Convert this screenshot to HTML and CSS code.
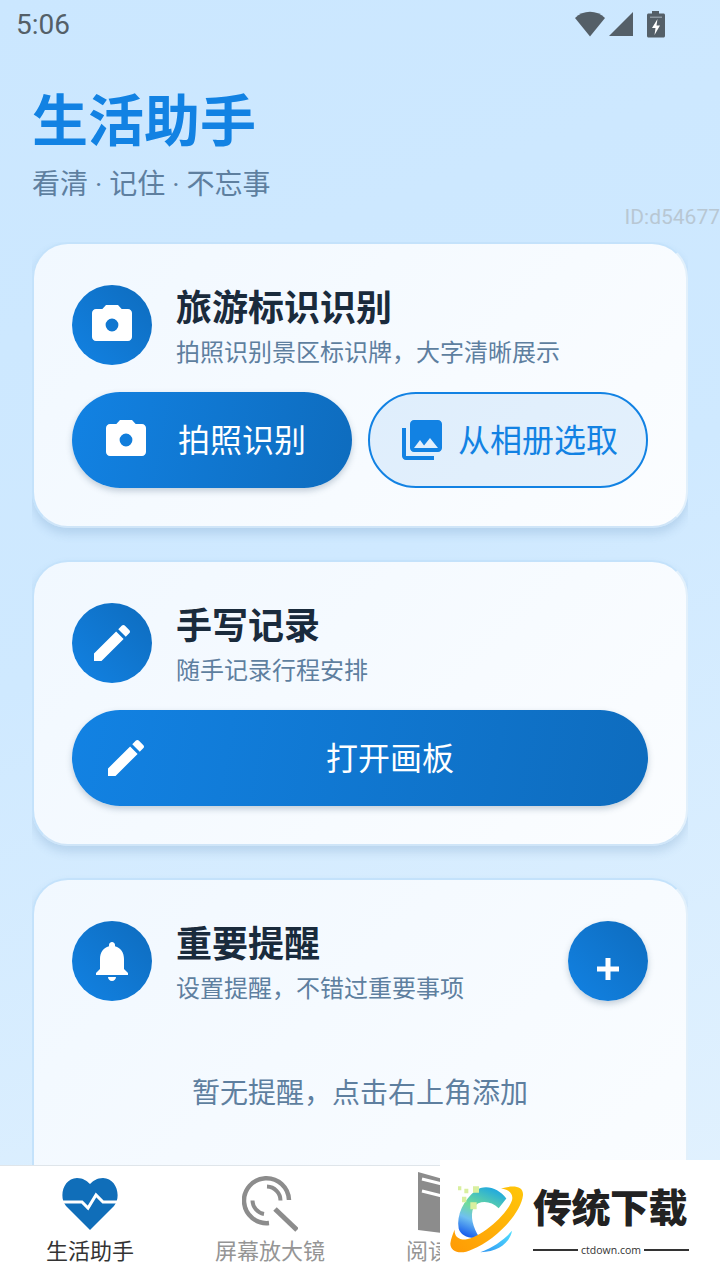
FILE: index.html
```html
<!DOCTYPE html>
<html>
  <head>
    <title>生活助手</title>
    <link rel="stylesheet" href="styles.css">
  </head>
  <body>
    <div class="screen">
      <div class="statusbar">
        <span class="time">5:06</span>
        <div class="status-icons">
          <svg width="32" height="26" viewBox="0 0 32 26"><path d="M1 7C9 -1.500 23 -1.500 31 7L16 25.500Z" fill="#545f68"/></svg>
          <svg width="26" height="26" viewBox="0 0 26 26"><path d="M25 1V25H1Z" fill="#545f68"/></svg>
          <svg class="battery" width="20" height="28" viewBox="0 0 20 28"><path d="M6 1H13V3.500H17.500C18.300 3.500 19 4.200 19 5V26C19 26.800 18.300 27.500 17.500 27.500H2.500C1.700 27.500 1 26.800 1 26V5C1 4.200 1.700 3.500 2.500 3.500H6Z" fill="#545f68"/><path d="M4 6.500H16V8H4Z" fill="#8c97a0"/><path d="M11.500 9L6 18H9.500L8.500 25L14 15.500H10.500Z" fill="#fff"/></svg>
        </div>
      </div>

      <header class="page-head">
        <h1>生活助手</h1>
        <p>看清 · 记住 · 不忘事</p>
      </header>

      <div class="user-id">ID:d54677</div>

      <main class="cards">
        <section class="card">
          <div class="card-head">
            <div class="round-icon">
              <svg width="48" height="48" viewBox="0 0 24 24"><path fill-rule="evenodd" d="M9 2L7.170 4H4c-1.100 0-2 .9-2 2v12c0 1.100.9 2 2 2h16c1.100 0 2-.9 2-2V6c0-1.100-.9-2-2-2h-3.170L15 2H9zm3 13.200a3.200 3.200 0 1 1 0-6.400 3.200 3.200 0 0 1 0 6.400z"/></svg>
            </div>
            <div class="card-info">
              <h2>旅游标识识别</h2>
              <p>拍照识别景区标识牌，大字清晰展示</p>
            </div>
          </div>
          <div class="btn-row">
            <button class="btn btn-fill">
              <svg width="48" height="48" viewBox="0 0 24 24"><path fill-rule="evenodd" d="M9 2L7.170 4H4c-1.100 0-2 .9-2 2v12c0 1.100.9 2 2 2h16c1.100 0 2-.9 2-2V6c0-1.100-.9-2-2-2h-3.170L15 2H9zm3 13.200a3.200 3.200 0 1 1 0-6.400 3.200 3.200 0 0 1 0 6.400z"/></svg>
              <span>拍照识别</span>
            </button>
            <button class="btn btn-line">
              <svg width="48" height="48" viewBox="0 0 24 24"><path d="M22 16V4c0-1.100-.9-2-2-2H8c-1.100 0-2 .9-2 2v12c0 1.100.9 2 2 2h12c1.100 0 2-.9 2-2zm-11-4l2.030 2.710L16 11l4 5H8l3-4zM2 6v14c0 1.100.9 2 2 2h14v-2H4V6H2z"/></svg>
              <span>从相册选取</span>
            </button>
          </div>
        </section>

        <section class="card">
          <div class="card-head">
            <div class="round-icon">
              <svg width="48" height="48" viewBox="0 0 24 24"><path d="M3 17.250V21h3.750L17.810 9.940l-3.750-3.750L3 17.250zM20.710 7.040c.39-.39.39-1.020 0-1.410l-2.340-2.340c-.39-.39-1.020-.39-1.410 0l-1.830 1.830 3.750 3.750 1.830-1.830z"/></svg>
            </div>
            <div class="card-info">
              <h2>手写记录</h2>
              <p>随手记录行程安排</p>
            </div>
          </div>
          <div class="btn-row">
            <button class="btn btn-fill">
              <svg width="48" height="48" viewBox="0 0 24 24"><path d="M3 17.250V21h3.750L17.810 9.940l-3.750-3.750L3 17.250zM20.710 7.040c.39-.39.39-1.020 0-1.410l-2.340-2.340c-.39-.39-1.020-.39-1.410 0l-1.830 1.830 3.750 3.750 1.830-1.830z"/></svg>
              <span>打开画板</span>
            </button>
          </div>
        </section>

        <section class="card card-open">
          <div class="card-head">
            <div class="round-icon">
              <svg width="48" height="48" viewBox="0 0 24 24"><path d="M12 22c1.100 0 2-.9 2-2h-4c0 1.100.89 2 2 2zm6-6v-5c0-3.070-1.640-5.640-4.500-6.320V4c0-.83-.67-1.500-1.500-1.500s-1.500.67-1.500 1.500v.68C7.630 5.360 6 7.920 6 11v5l-2 2v1h16v-1l-2-2z"/></svg>
            </div>
            <div class="card-info">
              <h2>重要提醒</h2>
              <p>设置提醒，不错过重要事项</p>
            </div>
            <button class="add-btn">
              <svg width="24" height="24" viewBox="0 0 24 24"><path d="M9.500 1H14.500V9.500H23V14.500H14.500V23H9.500V14.500H1V9.500H9.500Z"/></svg>
            </button>
          </div>
          <p class="empty">暂无提醒，点击右上角添加</p>
        </section>
      </main>

      <nav class="tabbar">
        <div class="tab tab-active">
          <svg width="56" height="60" viewBox="0 0 56 60">
            <path d="M28 56L4 32C-4 22 2 4 15 4C21 4 25 7 28 10C31 7 35 4 41 4C54 4 60 22 52 32Z" fill="#106eb9"/>
            <path d="M0 28H20L26 34L34 21L41 28H56" fill="none" stroke="#fff" stroke-width="3"/>
          </svg>
          <span>生活助手</span>
        </div>
        <div class="tab">
          <svg width="56" height="60" viewBox="0 0 56 60" fill="none" stroke="#8c8c8c">
            <path d="M47 26A22.500 22.500 0 1 0 27 49" stroke-width="4.500"/>
            <path d="M25 12.500A14 14 0 0 1 38.500 26.500" stroke-width="4"/>
            <path d="M10.500 26.500A14 14 0 0 0 22 40" stroke-width="4"/>
            <path d="M33 35L55 56" stroke-width="5"/>
          </svg>
          <span>屏幕放大镜</span>
        </div>
        <div class="tab">
          <svg class="book-icon" width="64" height="62" viewBox="0 0 64 62">
            <path d="M0 0L32 9V62L0 58Z" fill="#8c8c8c"/>
            <path d="M4 7L32 14M4 19L32 26" stroke="#fff" stroke-width="3"/>
          </svg>
          <span>阅读助手</span>
        </div>
      </nav>

      <div class="badge">
        <svg class="badge-logo" width="80" height="77" viewBox="50 90 240 230">
          <defs>
            <linearGradient id="ring" x1="1" y1="0" x2="0" y2="1">
              <stop offset="0" stop-color="#ffc60a"/>
              <stop offset="1" stop-color="#ff9a05"/>
            </linearGradient>
            <linearGradient id="cee" x1="0.7" y1="0" x2="0.3" y2="1">
              <stop offset="0" stop-color="#1fa8e0"/>
              <stop offset="0.45" stop-color="#6fdc9a"/>
              <stop offset="0.7" stop-color="#6fc0f0"/>
              <stop offset="1" stop-color="#1c62ec"/>
            </linearGradient>
            <linearGradient id="tail" x1="1" y1="0" x2="0" y2="1">
              <stop offset="0" stop-color="#52e0ff"/>
              <stop offset="1" stop-color="#2f96f2"/>
            </linearGradient>
          </defs>
          <path d="M228 145C205 115 165 100 135 122C100 150 78 195 85 235C90 255 115 268 148 262C128 235 118 195 130 172C145 150 180 150 205 174Z" fill="url(#cee)"/>
          <path d="M212 115C245 105 280 105 278 135C272 190 195 270 125 298C90 315 60 305 60 280C62 265 68 250 73 238C72 255 80 268 105 268C150 262 230 195 245 150C250 130 235 118 212 115Z" fill="url(#ring)"/>
          <path d="M245 242C240 275 205 305 150 306C190 292 222 268 245 242Z" fill="url(#tail)"/>
          <path d="M128 108H146V128H128ZM83 108H93V120H83ZM102 116H114V129H102ZM95 140H108V156H95ZM120 156H139V177H120Z" fill="#d9ef9f"/>
        </svg>
        <div class="badge-text">
          <strong>传统下载</strong>
          <div class="badge-site"><i></i><span>ctdown.com</span><i></i></div>
        </div>
      </div>
    </div>
  </body>
</html>
```

FILE: styles.css
```css
* {
  box-sizing: border-box;
}

html, body {
  margin: 0;
  padding: 0;
}

body {
  font-family: Roboto, "Noto Sans CJK SC", sans-serif;
}

.screen {
  position: relative;
  display: flex;
  flex-direction: column;
  width: 720px;
  height: 1280px;
  overflow: hidden;
  background: linear-gradient(160deg, #cbe7ff 0%, #cfe9ff 45%, #e3f2fe 100%);
}

.statusbar {
  display: flex;
  justify-content: space-between;
  align-items: center;
  height: 52px;
  padding: 0 54px 4px 16px;
  flex-shrink: 0;
}

.time {
  font-size: 28px;
  color: #545f68;
}

.status-icons {
  display: flex;
  align-items: center;
  gap: 2px;
}

.battery {
  margin-left: 10px;
}

.page-head {
  padding: 30px 32px 0;
  height: 190px;
  flex-shrink: 0;
}

.page-head h1 {
  margin: 0;
  font-size: 56px;
  line-height: 80px;
  font-weight: 700;
  color: #1282e3;
}

.page-head p {
  margin: 3px 0 0;
  font-size: 28px;
  line-height: 40px;
  color: #5e7f9f;
}

.user-id {
  position: absolute;
  top: 203px;
  right: 0;
  font-size: 21px;
  line-height: 28px;
  color: #b8c7d3;
  white-space: nowrap;
}

.cards {
  flex: 1;
  min-height: 0;
  margin: 0 32px;
  overflow: hidden;
  display: flex;
  flex-direction: column;
  gap: 32px;
}

.card {
  flex-shrink: 0;
  height: 286px;
  padding: 41px 38px 0;
  border: 2px solid #c4e2fb;
  border-right-color: #e2f0fb;
  border-bottom-color: #cfe5f8;
  border-radius: 36px;
  background: linear-gradient(135deg, #f1f8ff 0%, #fbfdff 100%);
  box-shadow: 0 6px 10px rgba(60, 110, 160, 0.18);
}

.card-open {
  height: 400px;
}

.card-head {
  display: flex;
  align-items: center;
  gap: 24px;
  height: 80px;
}

.round-icon {
  display: flex;
  align-items: center;
  justify-content: center;
  width: 80px;
  height: 80px;
  flex-shrink: 0;
  border-radius: 50%;
  background: linear-gradient(45deg, #1282e3, #0e6cbe);
  fill: #fff;
}

.card-info {
  flex: 1;
  min-width: 0;
  align-self: flex-start;
}

.card-info h2 {
  margin: 1px 0 4px;
  font-size: 36px;
  line-height: 46px;
  font-weight: 700;
  color: #1a2b3c;
}

.card-info p {
  margin: 0;
  font-size: 24px;
  line-height: 34px;
  color: #5e7f9f;
}

.btn-row {
  display: flex;
  gap: 16px;
  margin-top: 27px;
}

.btn {
  display: flex;
  align-items: center;
  gap: 12px;
  flex: 1;
  height: 96px;
  padding: 0 30px;
  border-radius: 48px;
  border: none;
  font-family: inherit;
  font-size: 32px;
  line-height: 44px;
}

.btn span {
  flex: 1;
  text-align: center;
  white-space: nowrap;
  margin-top: 2px;
}

.btn svg {
  flex-shrink: 0;
}

.btn-fill {
  background: linear-gradient(100deg, #1282e3, #0e6cbe);
  color: #fff;
  fill: #fff;
  box-shadow: 0 3px 6px rgba(40, 70, 100, 0.25);
}

.btn-line {
  padding: 0 28px;
  background: linear-gradient(135deg, #dfeefc, #e3f0fc);
  border: 2px solid #1282e3;
  color: #1282e3;
  fill: #1282e3;
}

.add-btn {
  display: flex;
  align-items: flex-end;
  justify-content: center;
  width: 80px;
  height: 80px;
  padding: 0 0 20px;
  flex-shrink: 0;
  border: none;
  border-radius: 50%;
  background: linear-gradient(45deg, #1282e3, #0e6cbe);
  fill: #fff;
  box-shadow: 0 3px 6px rgba(40, 70, 100, 0.25);
}

.empty {
  margin: 73px 0 0;
  text-align: center;
  font-size: 28px;
  line-height: 40px;
  color: #5e7f9f;
}

.tabbar {
  display: grid;
  grid-template-columns: repeat(4, 180px);
  height: 115px;
  flex-shrink: 0;
  padding-top: 8px;
  background: #fff;
  border-top: 1px solid #dfe5ea;
}

.tab {
  display: flex;
  flex-direction: column;
  align-items: center;
  font-size: 22px;
  line-height: 30px;
  color: #959595;
}

.tab span {
  margin-top: 3px;
}

.tab .book-icon {
  margin: -2px 0 0;
}

.tab-active {
  color: #333;
}

.badge {
  position: absolute;
  left: 440px;
  top: 1160px;
  display: flex;
  width: 280px;
  height: 120px;
  padding: 20px 0 0 7px;
  gap: 6px;
  background: #fff;
}

.badge-text {
  display: flex;
  flex-direction: column;
  width: 156px;
}

.badge-text strong {
  font-family: "Noto Sans CJK SC", sans-serif;
  font-size: 39px;
  line-height: 50px;
  font-weight: 900;
  color: #222;
  white-space: nowrap;
  letter-spacing: -0.5px;
}

.badge-site {
  display: flex;
  align-items: center;
  gap: 3px;
  margin-top: 12px;
  font-family: "Open Sans", sans-serif;
  font-size: 10.500px;
  line-height: 16px;
  color: #333;
}

.badge-site i {
  flex: 1;
  height: 2px;
  background: #333;
}
```
